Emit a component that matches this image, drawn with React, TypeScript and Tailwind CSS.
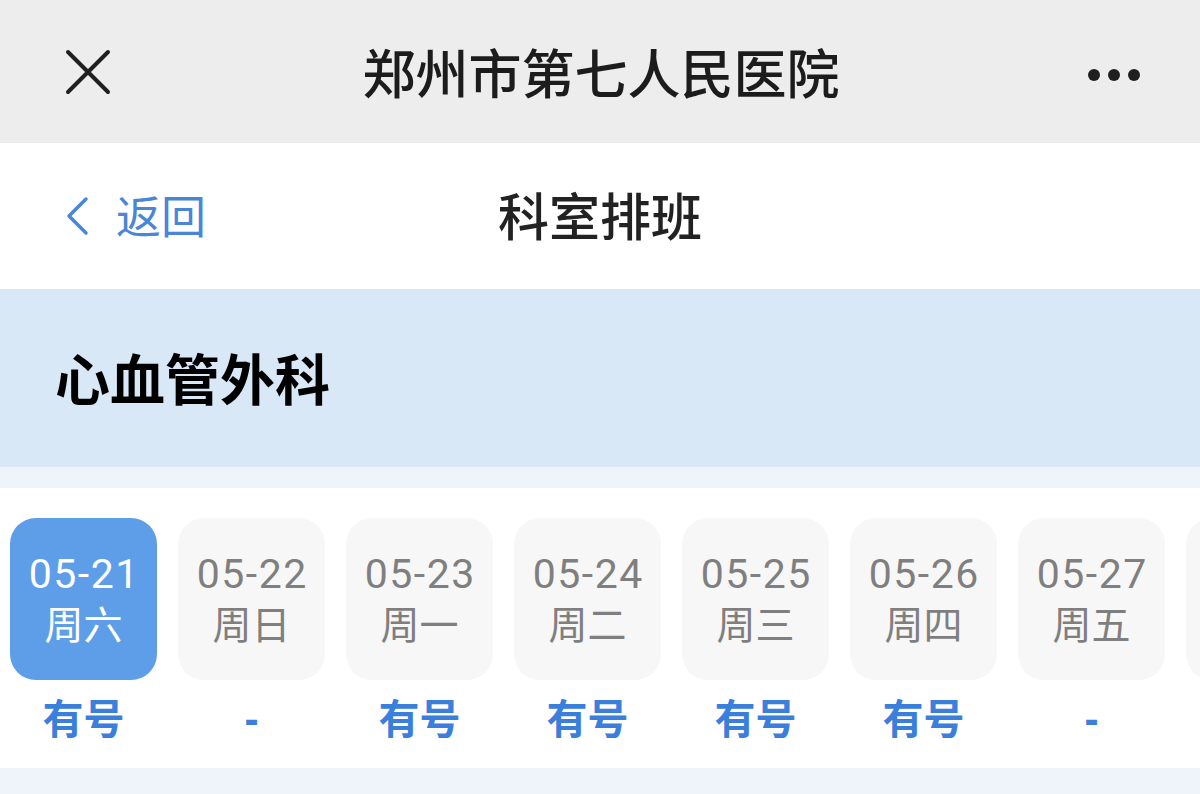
const DAYS = [
  { date: "05-21", week: "周六", status: "有号" },
  { date: "05-22", week: "周日", status: "-" },
  { date: "05-23", week: "周一", status: "有号" },
  { date: "05-24", week: "周二", status: "有号" },
  { date: "05-25", week: "周三", status: "有号" },
  { date: "05-26", week: "周四", status: "有号" },
  { date: "05-27", week: "周五", status: "-" },
];

export default function App() {
  const font = { fontFamily: '"Noto Sans", "Noto Sans CJK SC", sans-serif' };
  return (
    <div className="w-[1200px] h-[794px] overflow-hidden bg-[#eef4fa]" style={font}>
      {/* wechat top bar */}
      <div className="h-[143px] bg-[#ededed] flex items-center justify-between px-[64px] relative">
        <svg width="48" height="48" viewBox="0 0 48 48" aria-hidden="true">
          <path d="M4 4L44 44M44 4L4 44" stroke="#1f1f1f" strokeWidth="4" strokeLinecap="round" />
        </svg>
        <div className="absolute left-0 right-0 top-0 h-full flex items-center justify-center pointer-events-none">
          <span className="text-[53px] font-medium text-[#1c1c1c] pl-[2px] mt-[4px]">郑州市第七人民医院</span>
        </div>
        <div className="flex items-center gap-[8px] mr-[-4px] mt-[6px]">
          <span className="w-[12px] h-[12px] rounded-full bg-[#1f1f1f]" />
          <span className="w-[12px] h-[12px] rounded-full bg-[#1f1f1f]" />
          <span className="w-[12px] h-[12px] rounded-full bg-[#1f1f1f]" />
        </div>
      </div>

      {/* page nav */}
      <div className="h-[146px] bg-white flex items-center relative px-[64px]">
        <div className="flex items-center gap-[26px] text-[#4a86d6]">
          <svg width="26" height="40" viewBox="0 0 26 40" aria-hidden="true">
            <path d="M22 3L5 20L22 37" fill="none" stroke="#4a86d6" strokeWidth="3.5" strokeLinecap="round" strokeLinejoin="round" />
          </svg>
          <span className="text-[45px] leading-none">返回</span>
        </div>
        <div className="absolute inset-0 flex items-center justify-center pointer-events-none">
          <span className="text-[51px] font-medium text-[#222]">科室排班</span>
        </div>
      </div>

      {/* department */}
      <div className="h-[178px] bg-[#d8e8f7] flex items-center px-[55px]">
        <span className="text-[55px] font-bold text-black leading-none">心血管外科</span>
      </div>

      <div className="h-[21px] bg-[#eef4fa]" />

      {/* dates */}
      <div className="h-[280px] bg-white pt-[30px] pl-[10px] flex gap-[21px] overflow-hidden">
        {DAYS.map((d, i) => {
          const active = i === 0;
          return (
            <div key={d.date} className="shrink-0 w-[147px] flex flex-col items-center">
              <div
                className={`w-[147px] h-[162px] rounded-[26px] flex flex-col items-center justify-center ${
                  active ? "bg-[#5e9ee8] text-white" : "bg-[#f7f7f7] text-[#7f7f7f]"
                }`}
              >
                <span className="text-[41px] leading-[50px] font-['Roboto'] tracking-[1.5px] pl-[1.5px]">{d.date}</span>
                <span className="text-[39px] leading-[50px]">{d.week}</span>
              </div>
              <span className="mt-[14px] text-[41px] leading-[48px] font-bold text-[#3a7fdc]">{d.status}</span>
            </div>
          );
        })}
        {/* next card, scrolled mostly out of view */}
        <div className="shrink-0 w-[147px] h-[162px] rounded-[26px] bg-[#f7f7f7]" />
      </div>
    </div>
  );
}
